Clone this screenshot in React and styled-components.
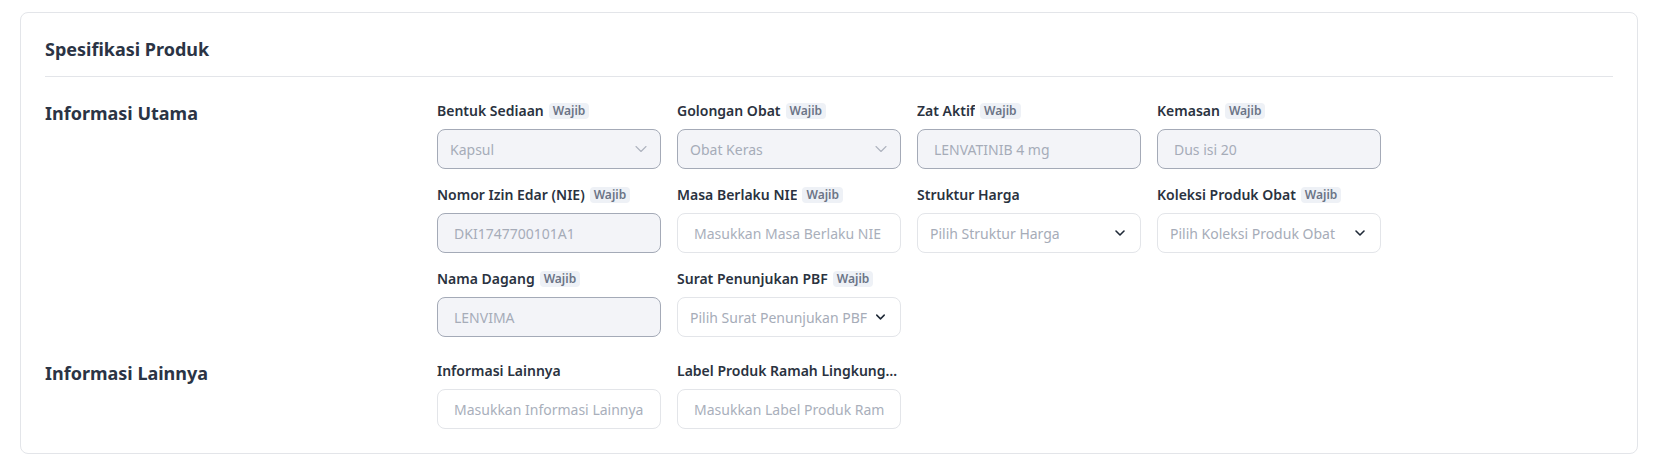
import styled, { createGlobalStyle } from "styled-components";
import { ChevronDown } from "lucide-react";

const GlobalStyle = createGlobalStyle`
  body {
    margin: 0;
    background: #fff;
    font-family: "Noto Sans", "Open Sans", sans-serif;
    color: #2b3445;
  }
`;

const mainFields = [
  { label: "Bentuk Sediaan", required: true, type: "select", value: "Kapsul", disabled: true },
  { label: "Golongan Obat", required: true, type: "select", value: "Obat Keras", disabled: true },
  { label: "Zat Aktif", required: true, type: "input", value: "LENVATINIB 4 mg", disabled: true },
  { label: "Kemasan", required: true, type: "input", value: "Dus isi 20", disabled: true },
  { label: "Nomor Izin Edar (NIE)", required: true, type: "input", value: "DKI1747700101A1", disabled: true },
  { label: "Masa Berlaku NIE", required: true, type: "input", placeholder: "Masukkan Masa Berlaku NIE" },
  { label: "Struktur Harga", type: "select", placeholder: "Pilih Struktur Harga" },
  { label: "Koleksi Produk Obat", required: true, type: "select", placeholder: "Pilih Koleksi Produk Obat" },
  { label: "Nama Dagang", required: true, type: "input", value: "LENVIMA", disabled: true },
  { label: "Surat Penunjukan PBF", required: true, type: "select", placeholder: "Pilih Surat Penunjukan PBF" },
];

const otherFields = [
  { label: "Informasi Lainnya", type: "input", placeholder: "Masukkan Informasi Lainnya" },
  { label: "Label Produk Ramah Lingkungan", type: "input", placeholder: "Masukkan Label Produk Ramah Lingkungan" },
];

function Field({ field }) {
  return (
    <FieldBox>
      <LabelRow>
        <LabelText>{field.label}</LabelText>
        {field.required && <Badge>Wajib</Badge>}
      </LabelRow>
      {field.type === "select" ? (
        <SelectBox type="button" $disabled={field.disabled}>
          <SelectText $muted={!field.value || field.disabled}>
            {field.value || field.placeholder}
          </SelectText>
          {field.disabled ? (
            <DisabledArrow>
              <ChevronDown size={20} strokeWidth={1.3} color="#aeb4bf" />
            </DisabledArrow>
          ) : (
            <ChevronDown size={16} strokeWidth={2.4} color="#1f2937" />
          )}
        </SelectBox>
      ) : (
        <TextInput
          disabled={field.disabled}
          defaultValue={field.value}
          placeholder={field.placeholder}
        />
      )}
    </FieldBox>
  );
}

function Section({ title, fields }) {
  return (
    <SectionRow>
      <SectionTitle>{title}</SectionTitle>
      <FieldGrid>
        {fields.map((f) => (
          <Field key={f.label} field={f} />
        ))}
      </FieldGrid>
    </SectionRow>
  );
}

export default function App() {
  return (
    <>
      <GlobalStyle />
      <Page>
        <Card>
          <CardHeader>Spesifikasi Produk</CardHeader>
          <Sections>
            <Section title="Informasi Utama" fields={mainFields} />
            <Section title="Informasi Lainnya" fields={otherFields} />
          </Sections>
        </Card>
      </Page>
    </>
  );
}

const Page = styled.div`
  padding: 12px 16px 15px 20px;
`;

const Card = styled.div`
  border: 1px solid #e3e5e9;
  border-radius: 8px;
  padding: 24px;
  background: #fff;
`;

const CardHeader = styled.h2`
  margin: 0 0 24px;
  padding-bottom: 15px;
  border-bottom: 1px solid #e3e5e9;
  font-size: 18px;
  line-height: 24px;
  font-weight: 700;
  color: #2b3445;
`;

const Sections = styled.div`
  display: flex;
  flex-direction: column;
  gap: 24px;
`;

const SectionRow = styled.div`
  display: grid;
  grid-template-columns: 25% 1fr;
`;

const SectionTitle = styled.h3`
  margin: 0;
  font-size: 18px;
  line-height: 24px;
  font-weight: 700;
  color: #2b3445;
`;

const FieldGrid = styled.div`
  display: grid;
  grid-template-columns: repeat(4, 224px);
  column-gap: 16px;
  row-gap: 16px;
`;

const FieldBox = styled.div`
  display: flex;
  flex-direction: column;
  gap: 8px;
  min-width: 0;
`;

const LabelRow = styled.div`
  display: flex;
  align-items: center;
  gap: 5px;
  height: 20px;
  min-width: 0;
`;

const LabelText = styled.span`
  font-size: 14px;
  line-height: 20px;
  font-weight: 600;
  color: #2a3240;
  white-space: nowrap;
  overflow: hidden;
  text-overflow: ellipsis;
`;

const Badge = styled.span`
  flex-shrink: 0;
  padding: 0 4px;
  border-radius: 4px;
  background: #eef1f6;
  color: #6b7486;
  font-size: 12px;
  line-height: 16px;
  font-weight: 600;
`;

const SelectBox = styled.button`
  display: flex;
  align-items: center;
  justify-content: space-between;
  gap: 6px;
  width: 100%;
  height: 40px;
  padding: 0 12px;
  border: 1px solid ${(p) => (p.$disabled ? "#a4aab7" : "#e3e5e9")};
  border-radius: 8px;
  background: ${(p) => (p.$disabled ? "#f3f4f8" : "#fff")};
  font-family: inherit;
  cursor: ${(p) => (p.$disabled ? "default" : "pointer")};
  overflow: hidden;
`;

const SelectText = styled.span`
  font-size: 14px;
  color: ${(p) => (p.$muted ? "#a6acb8" : "#252d3b")};
  white-space: nowrap;
`;

const DisabledArrow = styled.span`
  display: flex;
  margin-right: -3px;
`;

const TextInput = styled.input`
  box-sizing: border-box;
  width: 100%;
  height: 40px;
  padding: 0 16px;
  border: 1px solid #e3e5e9;
  border-radius: 8px;
  background: #fff;
  font-family: inherit;
  font-size: 14px;
  color: #252d3b;
  outline: none;

  &::placeholder {
    color: #a9afbb;
  }

  &:disabled {
    background: #f3f4f8;
    border-color: #a4aab7;
    color: #a6acb8;
  }
`;
